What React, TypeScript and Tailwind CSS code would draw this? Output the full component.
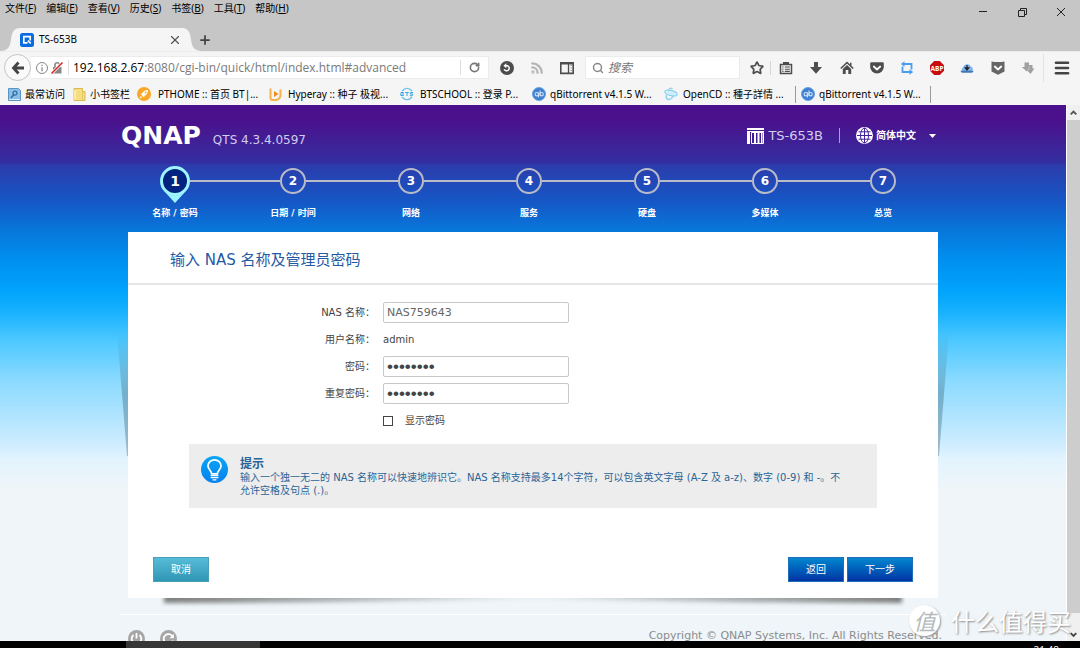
import React from 'react';
import { Menu, Rss, Search, Star, X, Plus, RotateCw } from 'lucide-react';

const CHROME_FONT = "font-['Open_Sans','Noto_Sans_CJK_SC',sans-serif]";
const LABEL_FONT = "font-['Noto_Sans','Noto_Sans_CJK_SC',sans-serif]";
const PAGE_FONT = "font-['DejaVu_Sans','Noto_Sans_CJK_SC',sans-serif]";

const menus = [
  { label: '文件', key: 'F' },
  { label: '编辑', key: 'E' },
  { label: '查看', key: 'V' },
  { label: '历史', key: 'S' },
  { label: '书签', key: 'B' },
  { label: '工具', key: 'T' },
  { label: '帮助', key: 'H' },
];

const steps = ['名称 / 密码', '日期 / 时间', '网络', '服务', '硬盘', '多媒体', '总览'];

const QFavicon = () => (
  <svg viewBox="0 0 14 14" className="size-[14px] shrink-0">
    <rect width="14" height="14" rx="2.5" fill="#0a6be0" />
    <path d="M10.200 7.500V3.600H3.800v6.300H7.500" fill="none" stroke="#fff" strokeWidth="1.700" />
    <path d="M7.800 7.600l3 2.800" stroke="#fff" strokeWidth="1.600" />
  </svg>
);

const MostVisitedIcon = () => (
  <svg viewBox="0 0 13 13" className="size-[13px]">
    <path d="M.5.5h10l2 2v10H.5z" fill="#8cbfe6" stroke="#5a94c4" />
    <circle cx="7" cy="5.200" r="2" fill="none" stroke="#2c6ba3" strokeWidth="1.200" />
    <path d="M5.600 6.800L3 10" stroke="#2c6ba3" strokeWidth="1.400" />
    <path d="M1 11.500h11" stroke="#d3e9f8" />
  </svg>
);

const FolderIcon = () => (
  <svg viewBox="0 0 13 13" className="size-[13px]">
    <path d="M1 .5h8.500v3H12v9H1z" fill="#f5dd80" stroke="#d8ba55" />
    <path d="M2 2v9.500" stroke="#fdf2bb" strokeWidth="1.500" />
    <path d="M9.500 3.500v8" stroke="#e5c766" />
  </svg>
);

const RocketIcon = () => (
  <svg viewBox="0 0 14 14" className="size-[14px]">
    <circle cx="7" cy="7" r="7" fill="#f9a825" />
    <path d="M11 3c-3 0-5 1.600-6 3.600L3.200 7l1.500 1L6 9.300l1 1.500.500-1.800C9.500 8 11 6 11 3z" fill="#fff" />
    <path d="M3 11l1.700-1.700" stroke="#fff" strokeWidth="1.200" />
    <circle cx="8.600" cy="5.400" r=".9" fill="#f9a825" />
  </svg>
);

const HyperayIcon = () => (
  <svg viewBox="0 0 13 13" className="size-[13px]">
    <path d="M1.500.5v9.500q0 2 2 2h4q4-1 4-5.500V1.500" fill="none" stroke="#f7b04a" strokeWidth="2" />
    <path d="M5 3l4.500 3L5 9z" fill="#f08c1c" />
  </svg>
);

const BtsIcon = () => (
  <svg viewBox="0 0 14 14" className="size-[14px]">
    <path d="M2 4q5-5.500 10 0M2 10q5 5.500 10 0" fill="none" stroke="#63bde6" strokeWidth="1.200" />
    <path d="M1 5.500h2.500L2.800 7l.7 1.500H.8zM5.200 5.500h3.600M7 5.500v3.500M13 5.500h-2.500L10.300 7h2.200l-.3 1.700H9.800" fill="none" stroke="#3aa5dc" />
  </svg>
);

const QbIcon = () => (
  <svg viewBox="0 0 14 14" className="size-[14px]">
    <circle cx="7" cy="7" r="6.500" fill="#3f7fd0" stroke="#6aa2e2" />
    <circle cx="4.800" cy="7.200" r="1.700" fill="none" stroke="#cfe2fa" strokeWidth="1.100" />
    <path d="M6.500 5.500v5M8 3.500v5.300" stroke="#cfe2fa" strokeWidth="1.100" />
    <circle cx="9.600" cy="7.200" r="1.700" fill="none" stroke="#cfe2fa" strokeWidth="1.100" />
  </svg>
);

const OpenCdIcon = () => (
  <svg viewBox="0 0 14 14" className="size-[14px]">
    <ellipse cx="7" cy="6" rx="6.300" ry="2.600" fill="#cdeefa" stroke="#7fcdea" transform="rotate(14 7 6)" />
    <path d="M4.500 3.500Q6 0 8.500 2M2.500 8q-1 4 2 4.500 3 0 5-4" fill="none" stroke="#8fd4ee" strokeWidth="1.500" />
  </svg>
);

const bookmarks = [
  { label: '最常访问', icon: <MostVisitedIcon />, box: 'w-[65px] gap-1' },
  { label: '小书签栏', icon: <FolderIcon />, box: 'w-[64px] gap-1' },
  { label: 'PTHOME :: 首页 BT|...', icon: <RocketIcon />, box: 'w-[132px] gap-[7px]' },
  { label: 'Hyperay :: 种子 极视...', icon: <HyperayIcon />, box: 'w-[131px] gap-1.5' },
  { label: 'BTSCHOOL :: 登录 P...', icon: <BtsIcon />, box: 'w-[132px] gap-1.5' },
  { label: 'qBittorrent v4.1.5 W...', icon: <QbIcon />, box: 'w-[132px] gap-1' },
  { label: 'OpenCD :: 種子詳情 ...', icon: <OpenCdIcon />, box: 'w-[131px] gap-[5px]' },
  { label: 'qBittorrent v4.1.5 W...', icon: <QbIcon />, box: 'w-[136px] gap-1 border-x border-[#999] pl-[5px]' },
];

const PocketIcon = ({ square }: { square?: boolean }) => (
  <svg viewBox="0 0 14 14" className="size-[14px]">
    <path
      d={square ? 'M.5 .5q6.500 1 13 0v10L7 13.800.5 10.500z' : 'M1.500 1.200h11q1.300 0 1.300 1.300v3.500a6.800 6.500 0 0 1-13.600 0V2.500q0-1.300 1.300-1.300z'}
      fill={square ? '#666' : '#4d4d4d'}
    />
    <path d="M3.800 5.500L7 8.500l3.200-3" fill="none" stroke="#fff" strokeWidth="1.800" strokeLinecap="round" strokeLinejoin="round" />
  </svg>
);

const toolbarButtons = [
  {
    name: '书签列表',
    icon: (
      <svg viewBox="0 0 14 14" className="size-[14px]">
        <path d="M1.500 3.500h11v9h-11z" fill="none" stroke="#4d4d4d" strokeWidth="1.500" />
        <path d="M4 3.500V1h6v2.500z" fill="#4d4d4d" />
        <path d="M3.200 6h1.300M5.800 6h5M3.200 8.200h1.300M5.800 8.200h5M3.200 10.400h1.300M5.800 10.400h5" stroke="#4d4d4d" strokeWidth="1.100" />
      </svg>
    ),
  },
  {
    name: '下载',
    icon: (
      <svg viewBox="0 0 14 14" className="size-[14px]">
        <path d="M5 1h4v5h4L7 12.800 1 6h4z" fill="#4d4d4d" />
      </svg>
    ),
  },
  {
    name: '主页',
    icon: (
      <svg viewBox="0 0 14 14" className="size-[14px]">
        <path d="M.8 7.500L7 1.500l6.200 6" fill="none" stroke="#4d4d4d" strokeWidth="1.600" />
        <path d="M2.800 8L7 4l4.200 4v5H8.300V9H5.700v4H2.800z" fill="#4d4d4d" />
        <path d="M10 1.800h1.500V5L10 3.500z" fill="#4d4d4d" />
      </svg>
    ),
  },
  { name: 'Pocket', icon: <PocketIcon /> },
  {
    name: '同步',
    icon: (
      <svg viewBox="0 0 14 14" className="size-[14px]">
        <path d="M4 3h7.500v5.500M10 11H2.500V5.500" fill="none" stroke="#4b9df0" strokeWidth="1.800" />
        <path d="M4.500.3v5.400L.8 3zM9.500 8.300v5.400l3.700-2.700z" fill="#4b9df0" />
      </svg>
    ),
  },
  {
    name: 'Adblock Plus',
    icon: (
      <svg viewBox="0 0 14 14" className="size-[14px]">
        <path d="M4.200 0h5.600L14 4.200v5.600L9.800 14H4.200L0 9.800V4.200z" fill="#c70d0d" />
        <text x="7" y="9.500" textAnchor="middle" fontSize="6.500" fontWeight="bold" fill="#fff">ABP</text>
      </svg>
    ),
  },
  {
    name: '云下载',
    icon: (
      <svg viewBox="0 0 14 14" className="size-[14px]">
        <path d="M2.500 10.500a2.500 2.500 0 0 1 .5-4A4.200 4.200 0 0 1 10.800 5.500a2.900 2.900 0 0 1 1 5z" fill="#7db4ee" />
        <path d="M.5 9.800h13q-.4 1.900-2 1.900h-9q-1.700 0-2-1.900z" fill="#4277b5" />
        <path d="M7 4v4M5.300 6.800L7 9l1.700-2.200z" fill="#222" stroke="#222" strokeWidth="1.200" />
      </svg>
    ),
  },
  { name: '收藏', icon: <PocketIcon square /> },
  {
    name: '附加组件',
    icon: (
      <svg viewBox="0 0 14 14" className="size-[14px]">
        <path d="M3.500 1.500H8V6h1.500L5.800 10.500.8 6h2.700z" fill="#a0a0a0" />
        <path d="M7.500 4h4v3.500h2L9.500 13 5.500 8.500h2z" fill="#a0a0a0" />
        <path d="M8 4.500v4H6.300" fill="none" stroke="#c4c4c4" strokeWidth=".8" />
      </svg>
    ),
  },
];

const MenuBar = () => (
  <div className="flex h-[27px] items-start bg-[#c6c6c6] pl-[5px]">
    <nav className={`flex gap-[10px] pt-[1px] text-[10px] leading-[14px] text-black ${LABEL_FONT}`}>
      {menus.map((m) => (
        <button key={m.key} type="button">
          {m.label}(<u>{m.key}</u>)
        </button>
      ))}
    </nav>
    <div className="ml-auto flex h-[23px] items-center gap-[27px] pr-[13px] text-[#222]">
      <button type="button" aria-label="最小化">
        <svg viewBox="0 0 12 12" className="size-3"><path d="M2 5.500h8" stroke="currentColor" /></svg>
      </button>
      <button type="button" aria-label="还原">
        <svg viewBox="0 0 12 12" className="size-3" fill="none" stroke="currentColor">
          <path d="M2.500 4.500h6v6h-6z" />
          <path d="M4.500 4.500v-2h6v6h-2" />
        </svg>
      </button>
      <button type="button" aria-label="关闭">
        <svg viewBox="0 0 12 12" className="size-3"><path d="M2 2l8 8M10 2l-8 8" stroke="currentColor" /></svg>
      </button>
    </div>
  </div>
);

const TabBar = () => (
  <div className="flex h-6 items-end bg-[#c6c6c6]">
    <div className="flex h-[23px] items-center">
      <svg viewBox="0 0 20 23" className="h-[23px] w-5"><path d="M0 23c8 0 10-4 11-11.500S14 0 20 0v23z" fill="#f5f5f6" /></svg>
      <div className="flex h-full w-[162px] items-center bg-[#f5f5f6]">
        <QFavicon />
        <span className={`ml-[5px] text-[10px] text-black ${LABEL_FONT}`}>TS-653B</span>
        <button type="button" aria-label="关闭标签页" className="ml-auto text-[#555]">
          <X size={14} strokeWidth={2} />
        </button>
      </div>
      <svg viewBox="0 0 20 23" className="h-[23px] w-5"><path d="M20 23c-8 0-10-4-11-11.500S6 0 0 0v23z" fill="#f5f5f6" /></svg>
    </div>
    <button type="button" aria-label="新建标签页" className="-ml-1 flex h-[23px] items-center text-[#444]">
      <Plus size={14} strokeWidth={3} />
    </button>
  </div>
);

const NavBar = () => (
  <div className="flex h-8 items-center border-t border-[#ececec] bg-[#f5f5f6] pl-[4px]">
    <button type="button" aria-label="后退" className="flex size-[27px] shrink-0 items-center justify-center rounded-full border border-[#c3c3c3] bg-[#fafafa]">
      <svg viewBox="0 0 14 14" className="size-[14px]"><path d="M7.500 1.500L2.500 7l5 5.500M2.500 7H13" fill="none" stroke="#444" strokeWidth="2.800" /></svg>
    </button>
    <div className="flex h-[23px] min-w-0 flex-1 items-center border border-l-0 border-[#ebebeb] bg-white pl-[4px]">
      <svg viewBox="0 0 14 14" className="size-[14px] shrink-0" fill="none" stroke="#888">
        <circle cx="7" cy="7" r="5.500" />
        <path d="M7 6.200v4M7 3.800v1.300" strokeWidth="1.300" />
      </svg>
      <svg viewBox="0 0 14 14" className="ml-px size-[14px] shrink-0">
        <path d="M3 6h8.500v6.500H3z" fill="#888" />
        <path d="M5 6.500V4a2.200 2.200 0 0 1 4.400 0v2.500" fill="none" stroke="#888" strokeWidth="1.600" />
        <path d="M1.500 12.500L12.500 1.500" stroke="#fff" strokeWidth="3" />
        <path d="M1.500 12.500L12.500 1.500" stroke="#d92d2d" strokeWidth="1.600" />
      </svg>
      <span className="ml-[4px] h-[15px] w-px shrink-0 bg-[#ddd]" />
      <label htmlFor="url" className="ml-[4px] text-[12px] text-black">192.168.2.67</label>
      <input
        id="url"
        className="min-w-0 flex-1 bg-transparent text-[12px] text-[#7a7a7a] outline-none"
        defaultValue=":8080/cgi-bin/quick/html/index.html#advanced"
      />
      <button type="button" aria-label="刷新" className="flex h-[15px] w-7 items-center justify-center border-l border-[#ddd] text-[#777]">
        <RotateCw size={11} strokeWidth={3.5} />
      </button>
    </div>
    <div className="flex w-[96px] shrink-0 items-center justify-around px-[3px] text-[#4d4d4d]">
      <button type="button" aria-label="恢复">
        <svg viewBox="0 0 14 14" className="size-[14px]">
          <circle cx="7" cy="7" r="7" fill="#4d4d4d" />
          <path d="M5 4.800h2.500a2.600 2.600 0 1 1-3.300 3.400" fill="none" stroke="#fff" strokeWidth="1.500" />
          <path d="M6.300 2.200v5L3.500 4.700z" fill="#fff" />
        </svg>
      </button>
      <button type="button" aria-label="订阅" className="text-[#b5b5b5]">
        <Rss size={14} strokeWidth={4} />
      </button>
      <button type="button" aria-label="侧栏">
        <svg viewBox="0 0 14 14" className="size-[14px]">
          <path d="M.8 1.800h12.400v10.600H.8z" fill="none" stroke="#4d4d4d" strokeWidth="1.600" />
          <path d="M.8 2.500h12.400" stroke="#4d4d4d" strokeWidth="2" />
          <path d="M8.500 3v9" stroke="#4d4d4d" strokeWidth="1.300" />
          <path d="M10.500 4.500h1.500M10.500 7h1.500M10.500 9.500h1.500" stroke="#999" />
        </svg>
      </button>
    </div>
    <div className="flex h-[23px] w-[155px] shrink-0 items-center border border-[#ebebeb] bg-white pl-[6px]">
      <Search size={12} strokeWidth={3} className="shrink-0 text-[#888]" />
      <input aria-label="搜索" placeholder="搜索" className="ml-1 min-w-0 flex-1 text-[12px] italic outline-none placeholder:text-[#777]" />
    </div>
    <button type="button" aria-label="收藏此页" className="flex w-[31px] shrink-0 items-center justify-center border-r border-[#d5d5d5] pl-1 text-[#4d4d4d]">
      <Star size={14} strokeWidth={3} />
    </button>
    <div className="flex w-[272px] shrink-0">
      {toolbarButtons.map((b) => (
        <button key={b.name} type="button" aria-label={b.name} className="flex flex-1 items-center justify-center">
          {b.icon}
        </button>
      ))}
    </div>
    <button type="button" aria-label="菜单" className="flex h-[28px] w-[37px] shrink-0 items-center justify-center border-l border-[#e2e2e2] text-[#444]">
      <Menu size={18} strokeWidth={3.5} />
    </button>
  </div>
);

const BookmarkBar = () => (
  <div className="flex h-[22px] items-center bg-[#f5f5f6] pl-[8px]">
    {bookmarks.map((b, i) => (
      <a key={i} href="#" className={`flex h-[17px] shrink-0 items-center text-[10px] whitespace-nowrap text-black ${LABEL_FONT} ${b.box}`}>
        <span className="shrink-0">{b.icon}</span>
        {b.label}
      </a>
    ))}
  </div>
);

const PageHeader = () => (
  <header className="flex h-[61px] items-center pl-px text-[#d3cdec]">
    <span className="text-[25px] leading-[32px] font-bold text-white">QNAP</span>
    <span className="ml-3 pt-2 text-[12px]">QTS 4.3.4.0597</span>
    <div className="ml-auto flex items-center pr-[10px]">
      <svg viewBox="0 0 17 16" className="h-4 w-[17px]" fill="#fff">
        <path d="M0 0h17v2H0zM0 3h17v1H0zM0 4h3v12H0z" />
        <path d="M4.500 4.500h12v11h-12z" fill="none" stroke="#fff" />
        <path d="M7 5h2v10H7zM10.500 5h2v10h-2zM14 5h1.500v10H14z" />
      </svg>
      <span className="ml-[4px] text-[13px]">TS-653B</span>
      <span className="ml-4 h-[15px] w-px bg-[#a99fd6]" />
      <svg viewBox="0 0 17 17" className="ml-4 size-[17px]">
        <circle cx="8.500" cy="8.500" r="8.500" fill="#fff" />
        <path d="M8.500 1v15M1 8.500h15M2.500 4.800h12M2.500 12.200h12" stroke="#41209a" />
        <ellipse cx="8.500" cy="8.500" rx="4" ry="7.500" fill="none" stroke="#41209a" />
      </svg>
      <select aria-label="语言" className="ml-[3px] w-[53px] appearance-none text-[10px] leading-[16px] font-bold text-white outline-none">
        <option>简体中文</option>
      </select>
      <svg viewBox="0 0 7 4" className="h-1 w-[7px]"><path d="M0 0h7L3.500 4z" fill="#fff" /></svg>
    </div>
  </header>
);

const Steps = () => (
  <ol className="mr-1 mb-3 -ml-1 grid grid-cols-7">
    {steps.map((label, i) => (
      <li key={label}>
        <div className="flex h-[30px] items-center">
          <span className={`h-0.5 flex-1 ${i === 0 ? '' : 'bg-[#b9bcc8]'}`} />
          {i === 0 ? (
            <span className="relative flex size-[30px] items-center justify-center rounded-full border-[3px] border-[#9ff5ff] bg-[#02237f] text-[14px] font-bold text-white">
              1
              <svg viewBox="0 0 20 11" className="absolute top-[23px] h-[11px] w-5"><path d="M0 0Q10 7 20 0L10 11z" fill="#9ff5ff" /></svg>
            </span>
          ) : (
            <span className="flex size-[26px] items-center justify-center rounded-full border-2 border-[#b9bcc8] text-[12px] font-bold text-white">
              {i + 1}
            </span>
          )}
          <span className={`h-0.5 flex-1 ${i === steps.length - 1 ? '' : 'bg-[#b9bcc8]'}`} />
        </div>
        <p className="mt-[10px] text-center text-[9px] leading-[14px] font-bold text-white">{label}</p>
      </li>
    ))}
  </ol>
);

const SideShadow = ({ side }: { side: 'left' | 'right' }) => (
  <svg
    viewBox="0 0 11 124"
    className={`absolute top-[100px] h-[124px] w-[11px] ${side === 'left' ? 'right-full' : 'left-full -scale-x-100'}`}
  >
    <defs>
      <linearGradient id={`shade-${side}`} x1="0" y1="0" x2="0" y2="1">
        <stop offset="0" stopColor="#3a6a80" stopOpacity="0" />
        <stop offset="0.5" stopColor="#3a6a80" stopOpacity="0.4" />
        <stop offset="1" stopColor="#5a7a8a" stopOpacity="0.45" />
      </linearGradient>
    </defs>
    <path d="M0 0h11v124h-1z" fill={`url(#shade-${side})`} />
  </svg>
);

const BottomShadow = () => (
  <svg viewBox="0 0 810 14" preserveAspectRatio="none" className="h-[14px] w-full">
    <defs>
      <linearGradient id="bottom-shade">
        <stop offset="0" stopColor="#555" stopOpacity="0.75" />
        <stop offset="0.5" stopColor="#555" stopOpacity="0.05" />
        <stop offset="1" stopColor="#555" stopOpacity="0.75" />
      </linearGradient>
      <filter id="soft" x="-5%" y="-100%" width="110%" height="300%"><feGaussianBlur stdDeviation="2" /></filter>
    </defs>
    <path d="M36-6V5Q250 5 405 0 560 5 774 5V-6z" fill="url(#bottom-shade)" filter="url(#soft)" />
  </svg>
);

const fieldBox = 'h-[21px] w-[186px] rounded-[2px] border border-[#c8c8c8] bg-white px-[3px] outline-none';
const passwordText = "font-['Liberation_Sans',sans-serif] text-[17px] text-[#444]";
const labelClass = 'pr-2 text-right';
const blueButton = 'h-[25px] border border-[#1f6fb8] bg-linear-to-b from-[#0a86cf] to-[#0033a4] text-[10px] text-white';

const WizardCard = () => (
  <main className="relative mx-2 bg-white">
    <SideShadow side="left" />
    <SideShadow side="right" />
    <h1 className="flex h-[53px] items-center border-b-2 border-[#e6e6e6] pt-1.5 pl-[42px] text-[15px] text-[#1f5aa5]">
      输入 NAS 名称及管理员密码
    </h1>
    <form className="grid grid-cols-[255px_1fr] gap-y-[6px] pt-[17px] text-[10px] leading-[21px] text-[#444]">
      <label htmlFor="nas" className={labelClass}>NAS 名称：</label>
      <input id="nas" className={`text-[11px] text-[#666] ${fieldBox}`} defaultValue="NAS759643" />
      <span className={labelClass}>用户名称：</span>
      <span>admin</span>
      <label htmlFor="pwd" className={labelClass}>密码：</label>
      <input id="pwd" type="password" autoComplete="off" className={`${passwordText} ${fieldBox}`} defaultValue="password" />
      <label htmlFor="pwd2" className={labelClass}>重复密码：</label>
      <input id="pwd2" type="password" autoComplete="off" className={`${passwordText} ${fieldBox}`} defaultValue="password" />
      <label className="col-start-2 flex items-center gap-3">
        <input type="checkbox" className="size-[10px] appearance-none border border-[#444] bg-white checked:bg-[#444]" />
        显示密码
      </label>
    </form>
    <section className="mx-[61px] mt-[13px] flex h-[64px] bg-[#ededed] pt-3 pr-[30px] pl-[12px] text-[#2a6496]">
      <svg viewBox="0 0 28 28" className="size-[27px] shrink-0">
        <defs>
          <linearGradient id="bulb" x1="0" y1="0" x2="0" y2="1">
            <stop offset="0" stopColor="#0aa6f5" />
            <stop offset="1" stopColor="#0580ee" />
          </linearGradient>
        </defs>
        <circle cx="14" cy="14" r="14" fill="url(#bulb)" />
        <path d="M11 18.500c0-3-3.800-4.500-3.800-8.300a6.800 6.300 0 0 1 13.600 0c0 3.800-3.800 5.300-3.800 8.300z" fill="none" stroke="#fff" strokeWidth="1.800" />
        <path d="M10 20.300h8M10 22.500h8M12 24.800h4" stroke="#fff" strokeWidth="1.400" />
      </svg>
      <div className="ml-3 pt-[2px] text-[10px] leading-[13px]">
        <h2 className="text-[12px] font-bold">提示</h2>
        <p>
          输入一个独一无二的 NAS 名称可以快速地辨识它。NAS 名称支持最多14个字符，可以包含英文字母 (A-Z 及 a-z)、数字 (0-9) 和 -。不允许空格及句点 (.)。
        </p>
      </div>
    </section>
    <div className="flex gap-[3px] px-[25px] pt-[49px] pb-[16px]">
      <button type="button" className="mr-auto h-[25px] w-[56px] border border-[#4aa0ba] bg-linear-to-b from-[#55bcd8] to-[#2f96b4] text-[10px] text-white">
        取消
      </button>
      <button type="button" className={`w-[56px] ${blueButton}`}>返回</button>
      <button type="button" className={`w-[66px] ${blueButton}`}>下一步</button>
    </div>
  </main>
);

const PageFooter = () => (
  <footer className="mt-0.5 flex items-start border-t border-white pt-[15px]">
    <button type="button" aria-label="关机" className="ml-2">
      <svg viewBox="0 0 17 17" className="size-[17px]">
        <circle cx="8.500" cy="8.500" r="8.500" fill="#a6a6a6" />
        <path d="M5.500 5a4.800 4.800 0 1 0 6 0M8.500 3v5.500" fill="none" stroke="#fff" strokeWidth="1.800" />
      </svg>
    </button>
    <button type="button" aria-label="重新启动" className="ml-[15px]">
      <svg viewBox="0 0 17 17" className="size-[17px]">
        <circle cx="8.500" cy="8.500" r="8.500" fill="#a6a6a6" />
        <path d="M12.500 6.500a4.700 4.700 0 1 0 .3 4" fill="none" stroke="#fff" strokeWidth="1.800" />
        <path d="M13.800 3.800v4.500H9.500z" fill="#fff" />
      </svg>
    </button>
    <p className="mr-1 ml-auto text-[11px] leading-[12px] text-[#8c8c8c]">Copyright © QNAP Systems, Inc. All Rights Reserved.</p>
  </footer>
);

const ScrollBar = () => (
  <div className="flex w-[14px] shrink-0 flex-col border-l border-white bg-[#f0f0f0]">
    <svg viewBox="0 0 14 15" className="h-[15px] w-[13px]"><path d="M4 9.500l3-3 3 3" fill="none" stroke="#555" strokeWidth="2" /></svg>
    <div className="mb-[13px] flex-1 bg-[#cdcdcd]" />
    <svg viewBox="0 0 14 15" className="h-[15px] w-[13px]"><path d="M4 7l3 3 3-3" fill="none" stroke="#444" strokeWidth="2" /></svg>
  </div>
);

const Watermark = () => (
  <div className="pointer-events-none absolute right-[9px] bottom-[12px] flex items-center gap-[11px] font-['Noto_Sans_CJK_SC',sans-serif] text-white">
    <span className="flex size-[31px] items-center justify-center rounded-full bg-white text-[22px] leading-[31px] text-[#b4babd] italic shadow-[1px_1px_2px_#999]">值</span>
    <span className="text-[24px] leading-[31px] [text-shadow:1px_1px_2px_#888]">什么值得买</span>
  </div>
);

export default function App() {
  return (
    <div className={`relative flex h-screen flex-col overflow-hidden ${CHROME_FONT}`}>
      <MenuBar />
      <TabBar />
      <NavBar />
      <BookmarkBar />
      <div className="flex min-h-0 flex-1">
        <div
          className={`min-w-0 flex-1 overflow-hidden bg-[#eff5f8] bg-[linear-gradient(to_bottom,#4b118c_0px,#4b118c_15px,#3c259a_45px,#322fa2_58px,#2c3cac_60px,#1656c4_95px,#0778dc_127px,#0090f0_155px,#02a5fd_188px,#1ab2fe_208px,#4cc8ff_235px,#8adaff_275px,#b4e5fe_315px,#cdecfe_338px,#e3f4fe_355px,#eff5f8_385px)] ${PAGE_FONT}`}
        >
          <div className="mx-auto max-w-[826px]">
            <PageHeader />
            <Steps />
            <WizardCard />
            <div className="mx-2 h-[14px]"><BottomShadow /></div>
            <PageFooter />
          </div>
        </div>
        <ScrollBar />
      </div>
      <div className="flex h-[7px] shrink-0 overflow-hidden bg-black">
        <span className="ml-[126px] w-[134px] bg-[#363636]" />
        <time className="mr-[21px] ml-auto pt-[3px] text-[10px] leading-[12px] text-white">21:48</time>
      </div>
      <Watermark />
    </div>
  );
}
